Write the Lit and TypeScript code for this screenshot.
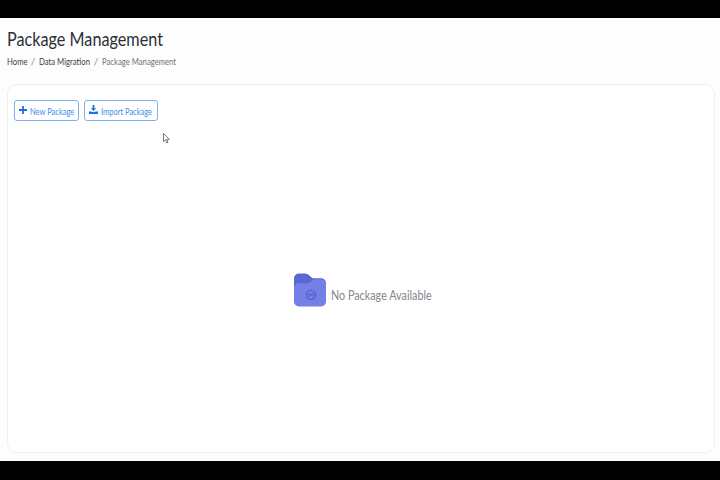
import { LitElement, html, css } from "lit";
import { customElement } from "lit/decorators.js";

@customElement("app-root")
export class AppRoot extends LitElement {
  static styles = css`
    :host {
      display: flex;
      flex-direction: column;
      height: 480px;
      width: 720px;
      background: #000;
      padding: 18px 0 19px;
      box-sizing: border-box;
      position: relative;
      overflow: hidden;
      font-family: Lato, "Liberation Sans", sans-serif;
    }
    .page {
      flex: 1;
      background: #fdfdfd;
      padding: 8px 5px 8px 7px;
      display: flex;
      flex-direction: column;
      min-height: 0;
    }
    .squeeze {
      display: inline-block;
      white-space: nowrap;
      transform-origin: left center;
    }
    h1 {
      margin: 0;
      height: 25px;
      font-size: 20px;
      line-height: 25px;
      font-weight: 400;
      color: #2b2f36;
    }
    h1 .squeeze { transform: scaleX(0.81); }
    .crumbs {
      display: flex;
      margin-top: 3px;
      font-size: 10px;
      line-height: 14px;
      color: #3a4048;
    }
    .crumbs .squeeze { transform: scaleX(0.77); }
    .crumbs .sep { color: #8a8f96; text-align: center; width: 12px; }
    .crumbs .home { width: 20px; }
    .crumbs .mig { width: 51px; }
    .crumbs .cur { color: #6c7178; width: 74px; }
    .card {
      flex: 1;
      margin-top: 16px;
      background: #fff;
      border: 1.5px solid #f0f0f1;
      border-radius: 10px;
      padding: 15px 6px 6px;
      display: flex;
      flex-direction: column;
      min-height: 0;
    }
    .actions { display: flex; gap: 5px; }
    .btn {
      height: 21px;
      box-sizing: border-box;
      display: flex;
      align-items: center;
      gap: 3px;
      padding: 0 4px;
      border: 1px solid #7fb0f5;
      border-radius: 3px;
      background: #fff;
      color: #3d8bf2;
      font-size: 10px;
      font-family: inherit;
    }
    .btn svg { width: 8px; height: 8px; fill: #1a6fe0; flex: none; margin-top: -2px; }
    .btn .wide { width: 9px; height: 9px; }
    .btn .squeeze { transform: scaleX(0.75); }
    .btn .new { width: 44px; }
    .btn .imp { width: 52px; }
    .empty {
      flex: 1;
      display: flex;
      align-items: center;
      justify-content: center;
      gap: 5px;
      padding: 12px 0 0 4px;
    }
    .empty svg { width: 32px; height: 34px; flex: none; }
    .empty .label {
      font-size: 13px;
      color: #84878c;
      margin-top: 10px;
      width: 101px;
      display: inline-block;
      white-space: nowrap;
      transform-origin: left center;
      transform: scaleX(0.83);
    }
    .cursor {
      position: absolute;
      left: 163px;
      top: 133px;
      width: 7px;
      height: 11px;
    }
  `;

  render() {
    return html`
      <div class="page">
        <h1><span class="squeeze">Package Management</span></h1>
        <div class="crumbs">
          <span class="squeeze home">Home</span><span class="sep">/</span>
          <span class="squeeze mig">Data Migration</span><span class="sep">/</span>
          <span class="squeeze cur">Package Management</span>
        </div>
        <div class="card">
          <div class="actions">
            <button class="btn">
              <svg viewBox="0 0 10 10"><path d="M3.900 0h2.200v3.900H10v2.200H6.100V10H3.900V6.100H0V3.900h3.900z" /></svg>
              <span class="squeeze new">New Package</span>
            </button>
            <button class="btn">
              <svg class="wide" viewBox="0 0 10 10"><path d="M4 0h2v3.600h2L5 6.800 2 3.600h2zM0 7.200h2.600L5 8l2.400-.8H10V10H0z" /></svg>
              <span class="squeeze imp">Import Package</span>
            </button>
          </div>
          <div class="empty">
            <svg viewBox="0 0 33 34">
              <path d="M5 0h6c2.500 0 4 1 5.500 2.500L19 5h9a5 5 0 0 1 5 5v8H0V5a5 5 0 0 1 5-5z" fill="#5c68d2" />
              <path d="M5 10h8c2.500 0 4-1 5.500-2.500L21 6h7a5 5 0 0 1 5 5v18a5 5 0 0 1-5 5H5a5 5 0 0 1-5-5V15a5 5 0 0 1 5-5z" fill="#7480e6" />
              <circle cx="17.500" cy="22" r="4.800" fill="none" stroke="#4f5bc4" stroke-width="1.100" />
              <path d="M14.500 19.500l6 5M20.500 19.500l-6 5M13.500 22h8" stroke="#4f5bc4" stroke-width=".7" fill="none" />
            </svg>
            <span class="label">No Package Available</span>
          </div>
        </div>
      </div>
      <svg class="cursor" viewBox="0 0 7 11">
        <path d="M.5.500v8l2-1.700 1.300 3 1.200-.5-1.300-3h2.600z" fill="#fff" stroke="#555" stroke-width=".8" />
      </svg>
    `;
  }
}
